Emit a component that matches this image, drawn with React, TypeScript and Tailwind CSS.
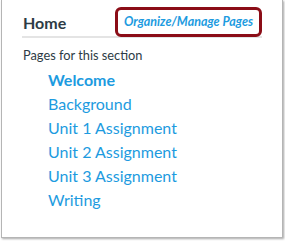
export default function App() {
  const links = ["Background", "Unit 1 Assignment", "Unit 2 Assignment", "Unit 3 Assignment", "Writing"];
  return (
    <div className="w-[285px] h-[241px] bg-white" style={{ fontFamily: "Lato, 'Open Sans', sans-serif" }}>
      <div className="ml-[1px] w-[282px] h-[238px] border-x border-b border-[#b5b5b5] shadow-[1px_1px_2px_rgba(0,0,0,0.35)] bg-white pt-[8px] pl-[20px] pr-[20px]">
        <div className="flex items-center justify-between border-b-2 border-[#e4e4e4] h-[30px]">
          <div className="text-[16px] font-bold text-[#2d3b45] leading-none mt-[2px] ml-[1px]">Home</div>
          <div className="relative h-[30px] w-[147px] border-[3px] border-[#8b0d17] rounded-[6px] flex items-center justify-center">
            <span className="text-[12.5px] font-bold italic text-[#1d9be0] leading-none">Organize/Manage Pages</span>
          </div>
        </div>
        <div className="mt-[9px] ml-[1px] text-[12.8px] text-[#2d3b45] leading-[16px]">Pages for this section</div>
        <div className="mt-[5px] ml-[26px] flex flex-col text-[16px] text-[#1d9be0] leading-[24px]">
          <span className="font-bold">Welcome</span>
          {links.map((l) => (
            <span key={l}>{l}</span>
          ))}
        </div>
      </div>
    </div>
  );
}
